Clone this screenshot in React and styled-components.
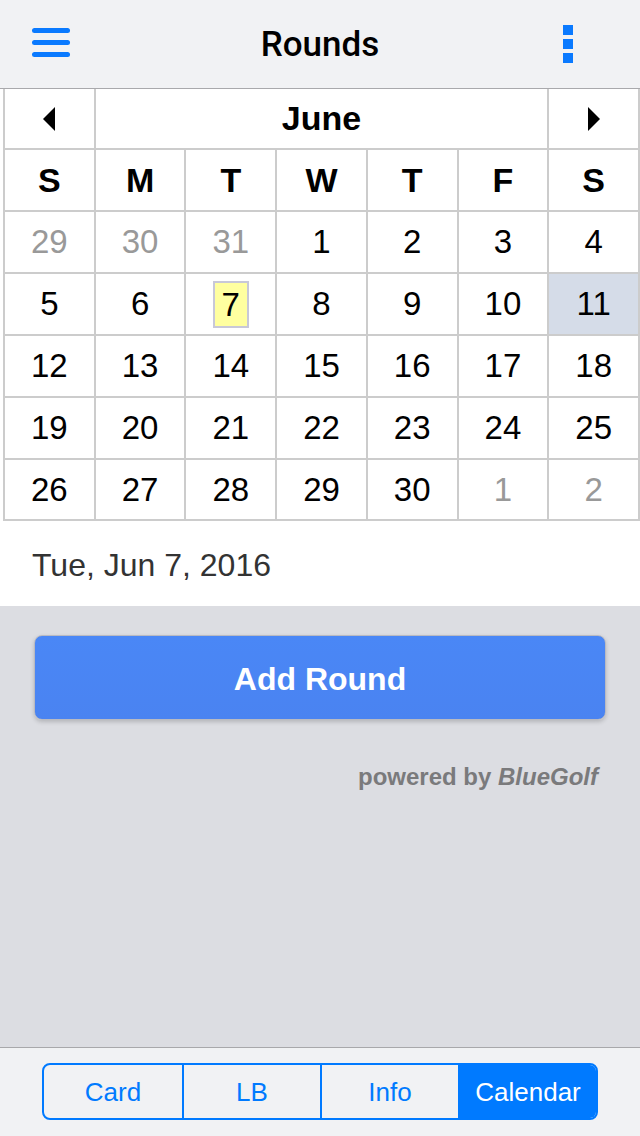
import React from 'react'
import styled, { createGlobalStyle } from 'styled-components'

const GlobalStyle = createGlobalStyle`
    html, body {
        margin: 0;
        padding: 0;
        background: #dcdde2;
    }
    body {
        font-family: "Liberation Sans", Arial, Helvetica, sans-serif;
    }
    * {
        box-sizing: border-box;
    }
`

const weekdays = ['S', 'M', 'T', 'W', 'T', 'F', 'S']

const days = [
    { n: 29, muted: true }, { n: 30, muted: true }, { n: 31, muted: true },
    { n: 1 }, { n: 2 }, { n: 3 }, { n: 4 },
    { n: 5 }, { n: 6 }, { n: 7, today: true }, { n: 8 }, { n: 9 }, { n: 10 }, { n: 11, selected: true },
    { n: 12 }, { n: 13 }, { n: 14 }, { n: 15 }, { n: 16 }, { n: 17 }, { n: 18 },
    { n: 19 }, { n: 20 }, { n: 21 }, { n: 22 }, { n: 23 }, { n: 24 }, { n: 25 },
    { n: 26 }, { n: 27 }, { n: 28 }, { n: 29 }, { n: 30 }, { n: 1, muted: true }, { n: 2, muted: true },
]

const tabs = ['Card', 'LB', 'Info', 'Calendar']

function App() {
    return (
        <Page>
            <GlobalStyle />
            <Header>
                <IconButton aria-label="menu">
                    <Burger>
                        <span />
                        <span />
                        <span />
                    </Burger>
                </IconButton>
                <Title>Rounds</Title>
                <IconButton aria-label="more" $end>
                    <Kebab>
                        <span />
                        <span />
                        <span />
                    </Kebab>
                </IconButton>
            </Header>

            <CalendarWrap>
                <Grid>
                    <Cell>
                        <svg width="12" height="24" viewBox="0 0 12 24">
                            <polygon points="0,12 12,0 12,24" fill="#000" />
                        </svg>
                    </Cell>
                    <MonthCell>June</MonthCell>
                    <Cell>
                        <svg width="12" height="24" viewBox="0 0 12 24">
                            <polygon points="12,12 0,0 0,24" fill="#000" />
                        </svg>
                    </Cell>
                    {weekdays.map((d, i) => (
                        <WeekdayCell key={i}>{d}</WeekdayCell>
                    ))}
                    {days.map((d, i) => (
                        <DayCell key={i} $muted={d.muted} $selected={d.selected}>
                            {d.today ? <Today>{d.n}</Today> : d.n}
                        </DayCell>
                    ))}
                </Grid>
            </CalendarWrap>

            <DateLine>Tue, Jun 7, 2016</DateLine>

            <Main>
                <AddButton>Add Round</AddButton>
                <Powered>
                    powered by <Brand>BlueGolf</Brand>
                </Powered>
            </Main>

            <TabBar>
                <Segmented>
                    {tabs.map((t) => (
                        <Segment key={t} $active={t === 'Calendar'}>{t}</Segment>
                    ))}
                </Segmented>
            </TabBar>
        </Page>
    )
}

const Page = styled.div`
    display: flex;
    flex-direction: column;
    width: 640px;
    height: 1136px;
    overflow: hidden;
`

const Header = styled.header`
    height: 89px;
    flex: none;
    display: grid;
    grid-template-columns: 1fr auto 1fr;
    align-items: center;
    padding: 0 32px;
    background: #f1f2f4;
    border-bottom: 1px solid #a9a9ac;
`

const IconButton = styled.div`
    display: flex;
    justify-self: ${(p) => (p.$end ? 'end' : 'start')};
    margin-top: ${(p) => (p.$end ? '0' : '-4px')};
    margin-right: ${(p) => (p.$end ? '35px' : '0')};
`

const Burger = styled.div`
    display: flex;
    flex-direction: column;
    gap: 7px;
    span {
        display: block;
        width: 38px;
        height: 5px;
        border-radius: 3px;
        background: #0a7aff;
    }
`

const Kebab = styled.div`
    display: flex;
    flex-direction: column;
    gap: 4px;
    span {
        display: block;
        width: 10px;
        height: 10px;
        background: #0a7aff;
    }
`

const Title = styled.h1`
    margin: 0;
    font-family: Roboto, "Liberation Sans", sans-serif;
    font-weight: 500;
    font-size: 35px;
    color: #000;
`

const CalendarWrap = styled.div`
    flex: none;
    background: #fff;
    padding-left: 3px;
`

const Grid = styled.div`
    display: grid;
    grid-template-columns: repeat(7, 1fr);
    grid-template-rows: 59px repeat(5, 60px) 59px;
    gap: 2px;
    padding: 0 2px 2px 2px;
    background: #cccccc;
`

const Cell = styled.div`
    display: flex;
    align-items: center;
    justify-content: center;
    background: #fff;
    color: #000;
`

const MonthCell = styled(Cell)`
    grid-column: span 5;
    font-size: 34px;
    font-weight: bold;
`

const WeekdayCell = styled(Cell)`
    font-size: 34px;
    font-weight: bold;
`

const DayCell = styled(Cell)`
    font-size: 33px;
    color: ${(p) => (p.$muted ? '#999' : '#000')};
    background: ${(p) => (p.$selected ? '#d5dce8' : '#fff')};
`

const Today = styled.span`
    display: inline-block;
    padding: 2px 7px;
    line-height: 39px;
    background: #ffffa0;
    border: 2px solid #c8c8d8;
`

const DateLine = styled.div`
    flex: none;
    height: 85px;
    display: flex;
    align-items: center;
    padding: 4px 32px 0;
    background: #fff;
    color: #333;
    font-size: 32px;
`

const Main = styled.main`
    flex: 1;
    display: flex;
    flex-direction: column;
    padding: 29px 34px 0;
    background: #dcdde2;
`

const AddButton = styled.button`
    height: 85px;
    border: 1px solid #b9bac2;
    border-radius: 8px;
    background: linear-gradient(#4a87f6, #4a83f1);
    box-shadow: 0 2px 4px rgba(0, 0, 0, 0.18);
    color: #fff;
    font-family: "Liberation Sans", Arial, sans-serif;
    font-size: 32px;
    font-weight: bold;
    padding: 4px 0 0;
`

const Powered = styled.div`
    margin-top: 43px;
    padding-right: 8px;
    text-align: right;
    font-size: 24px;
    font-weight: bold;
    color: #7a7a7c;
`

const Brand = styled.span`
    font-style: italic;
`

const TabBar = styled.footer`
    flex: none;
    height: 89px;
    display: flex;
    justify-content: center;
    padding-top: 15px;
    background: #f1f2f4;
    border-top: 1px solid #a8a8ab;
`

const Segmented = styled.div`
    display: grid;
    grid-template-columns: repeat(4, 1fr);
    width: 556px;
    height: 57px;
    border: 2px solid #007aff;
    border-radius: 8px;
    overflow: hidden;
`

const Segment = styled.div`
    display: flex;
    align-items: center;
    justify-content: center;
    padding-top: 2px;
    font-size: 26px;
    color: ${(p) => (p.$active ? '#fff' : '#007aff')};
    background: ${(p) => (p.$active ? '#007aff' : 'transparent')};
    & + & {
        border-left: 2px solid #007aff;
    }
`

export default App
